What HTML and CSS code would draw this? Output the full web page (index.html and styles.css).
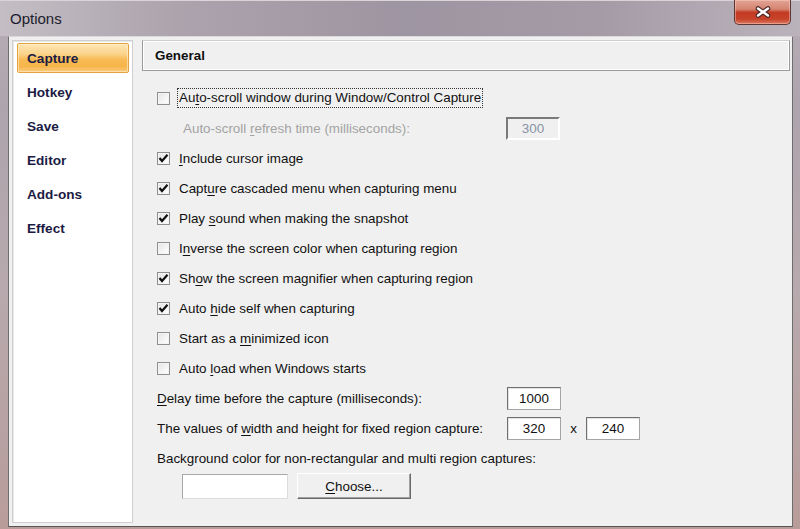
FILE: index.html
```html
<!DOCTYPE html>
<html>
<head>
    <title>Options</title>
    <meta charset="utf-8">
    <link rel="stylesheet" href="styles.css">
</head>
<body>
<div class="window">
    <div class="titlebar">
        <span class="title">Options</span>
        <div class="close">
            <svg width="22" height="14" viewBox="0 0 22 14">
                <path d="M6 3.5 L16 10.5 M16 3.5 L6 10.5" stroke="#4a2626" stroke-width="4.6" stroke-linecap="round"/>
                <path d="M6 3.5 L16 10.5 M16 3.5 L6 10.5" stroke="#ffffff" stroke-width="2.4" stroke-linecap="round"/>
            </svg>
        </div>
    </div>

    <div class="client">
        <ul class="nav">
            <li class="active">Capture</li>
            <li>Hotkey</li>
            <li>Save</li>
            <li>Editor</li>
            <li>Add-ons</li>
            <li>Effect</li>
        </ul>

        <div class="page">
            <div class="page-head">General</div>
            <div class="form">
                <div class="row">
                    <span class="box"></span>
                    <span class="focus">Au<u>t</u>o-scroll window during Window/Control Capture</span>
                </div>
                <div class="row sub">
                    <span class="label-sub disabled">Auto-scroll <u>r</u>efresh time (milliseconds):</span>
                    <span class="num num-off">300</span>
                </div>
                <div class="row">
                    <span class="box on"><svg width="11" height="11" viewBox="0 0 11 11"><path d="M1.5 5 L4 8 L9.5 1.8" fill="none" stroke="#111" stroke-width="2.2"/></svg></span>
                    <span><u>I</u>nclude cursor image</span>
                </div>
                <div class="row">
                    <span class="box on"><svg width="11" height="11" viewBox="0 0 11 11"><path d="M1.5 5 L4 8 L9.5 1.8" fill="none" stroke="#111" stroke-width="2.2"/></svg></span>
                    <span>Capt<u>u</u>re cascaded menu when capturing menu</span>
                </div>
                <div class="row">
                    <span class="box on"><svg width="11" height="11" viewBox="0 0 11 11"><path d="M1.5 5 L4 8 L9.5 1.8" fill="none" stroke="#111" stroke-width="2.2"/></svg></span>
                    <span>Play <u>s</u>ound when making the snapshot</span>
                </div>
                <div class="row">
                    <span class="box"></span>
                    <span>I<u>n</u>verse the screen color when capturing region</span>
                </div>
                <div class="row">
                    <span class="box on"><svg width="11" height="11" viewBox="0 0 11 11"><path d="M1.5 5 L4 8 L9.5 1.8" fill="none" stroke="#111" stroke-width="2.2"/></svg></span>
                    <span>Sh<u>o</u>w the screen magnifier when capturing region</span>
                </div>
                <div class="row">
                    <span class="box on"><svg width="11" height="11" viewBox="0 0 11 11"><path d="M1.5 5 L4 8 L9.5 1.8" fill="none" stroke="#111" stroke-width="2.2"/></svg></span>
                    <span>Auto <u>h</u>ide self when capturing</span>
                </div>
                <div class="row">
                    <span class="box"></span>
                    <span>Start as a <u>m</u>inimized icon</span>
                </div>
                <div class="row">
                    <span class="box"></span>
                    <span>Auto <u>l</u>oad when Windows starts</span>
                </div>
                <div class="row">
                    <span class="label"><u>D</u>elay time before the capture (milliseconds):</span>
                    <span class="num">1000</span>
                </div>
                <div class="row">
                    <span class="label">The values of <u>w</u>idth and height for fixed region capture:</span>
                    <span class="num">320</span>
                    <span class="times">x</span>
                    <span class="num">240</span>
                </div>
                <div class="row">
                    <span>Background color for non-rectangular and multi region captures:</span>
                </div>
                <div class="row pick">
                    <span class="swatch"></span>
                    <button class="btn"><u>C</u>hoose...</button>
                </div>
            </div>
        </div>
    </div>
</div>
</body>
</html>
```

FILE: styles.css
```css
* { box-sizing: border-box; }
html, body { margin: 0; padding: 0; }
body { width: 800px; height: 529px; overflow: hidden; font-family: "Liberation Sans", Arial, sans-serif; font-size: 13.4px; color: #111; }

.window { height: 529px; display: flex; flex-direction: column;
          background: linear-gradient(to bottom, #b6aeb6 0%, #aea4ad 20%, #b7a9ad 55%, #b89c9a 100%); }

.titlebar { height: 36px; flex: none; display: flex; justify-content: space-between; align-items: flex-start;
            background: linear-gradient(to right, #c4bec4 0%, #aca3ad 22%, #9e95a2 50%, #a49ba7 75%, #bbb3bb 100%);
            border-top: 1px solid #d8d4d8; }
.title { padding: 9px 0 0 10px; font-size: 15px; color: #1c1c2c; }
.close { width: 57px; height: 25px; margin: -1px 9px 0 0; display: flex; align-items: center; justify-content: center;
         border: 1px solid #5e3636; border-top: none; border-radius: 0 0 5px 5px;
         background: linear-gradient(to bottom, #e2a496 0%, #d58471 38%, #c33b22 52%, #c6432a 80%, #dc7a62 100%);
         box-shadow: inset 0 0 0 1px rgba(255,210,200,0.45); }

.client { flex: 1; display: flex; margin: 0 7px 2px 8px; padding: 3px 2px 3px 3px; background: #f0f0f0;
          border: 1px solid #6e6e6e; border-top-color: #dcd8dc; border-bottom-color: #555; }

.nav { width: 121px; flex: none; list-style: none; margin: 0; padding: 2px 3px 0 4px; background: #fff;
       border: 1px solid #cfcfcf; box-shadow: inset 1px 1px 0 #e8e8e8; }
.nav li { height: 30px; line-height: 30px; padding-left: 9px; margin-bottom: 4px; font-size: 13.6px; font-weight: bold; color: #1b1b44;
          border: 1px solid transparent; border-radius: 2px; }
.nav li.active { border-color: #e4a240;
                 background: linear-gradient(to bottom, #fde6b4 0%, #fbd48c 35%, #f8bb55 55%, #f7b54a 80%, #fbcb7c 100%);
                 box-shadow: inset 0 0 0 1px rgba(255,240,210,0.6); }

.page { flex: 1; margin-left: 9px; display: flex; flex-direction: column; }
.page-head { height: 31px; flex: none; padding-left: 12px; line-height: 29px; font-weight: bold; color: #111;
             border: 1px solid #9a9a9a; border-top-color: #cfcfcf; box-shadow: inset 1px 1px 0 #fff, inset -1px -1px 0 #fff; }

.form { display: flex; flex-direction: column; gap: 10px; padding: 17px 0 0 15px; }
.row { height: 20px; display: flex; align-items: center; white-space: nowrap; }
.row u { text-decoration-thickness: 1px; text-underline-offset: 2px; }

.box { width: 13px; height: 13px; flex: none; margin-right: 9px; display: flex; align-items: center; justify-content: center;
       border: 1px solid #8e8f8f; background: linear-gradient(135deg, #e2e2e2 0%, #f6f6f6 60%, #fff 100%);
       box-shadow: inset 0 0 0 1px #f4f4f4; }
.focus { margin-left: -2px; padding: 1px 1px 2px 1px; border: 1px dotted #333; }

.sub { padding-left: 26px; }
.label-sub { width: 323px; }
.disabled { color: #a3a3a3; }
.label { width: 350px; }

.num { width: 54px; height: 23px; flex: none; display: flex; align-items: center; justify-content: center;
       background: #fff; border: 1px solid #a5a5a5; border-top-color: #707070; border-left-color: #707070;
       box-shadow: inset 1px 1px 0 #e3e3e3; }
.num-off { background: #f0f0f0; color: #8993a6; border: 2px solid #fff; border-top-color: #7a7a7a; border-left-color: #7a7a7a; box-shadow: none; }
.times { width: 25px; text-align: center; }

.pick { height: 26px; margin-top: -5px; padding-left: 25px; }
.swatch { width: 106px; height: 25px; background: #fff; border: 1px solid #dcdcdc; border-top-color: #a8a8a8; border-left-color: #a8a8a8; }
.btn { width: 114px; height: 26px; margin-left: 9px; padding: 0; font: inherit; color: #111; background: #f0f0f0;
       border: 1px solid #fff; border-right-color: #6a6a6a; border-bottom-color: #6a6a6a;
       box-shadow: inset -1px -1px 0 #a0a0a0; }
```
